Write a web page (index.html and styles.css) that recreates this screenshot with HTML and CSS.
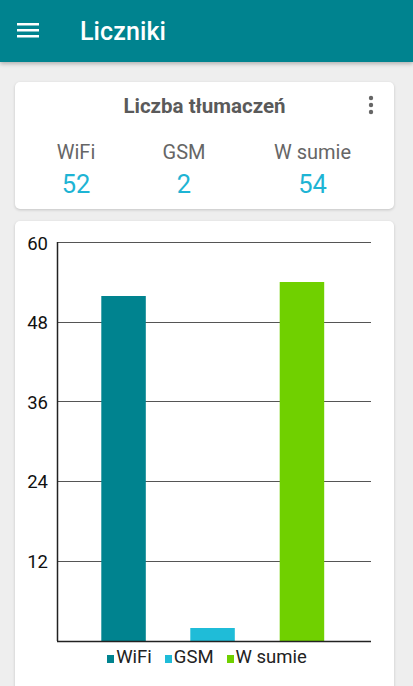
FILE: index.html
```html
<!DOCTYPE html>
<html lang="pl">
<head>
<meta charset="UTF-8">
<meta name="viewport" content="width=device-width, initial-scale=1.0">
<title>Liczniki</title>
<link rel="stylesheet" href="styles.css">
</head>
<body>
<header class="app-bar">
  <svg class="menu-icon" width="22" height="15" viewBox="0 0 22 15">
    <rect x="0" y="0" width="22" height="2.5" fill="#fff"/>
    <rect x="0" y="6" width="22" height="2.5" fill="#fff"/>
    <rect x="0" y="12" width="22" height="2.5" fill="#fff"/>
  </svg>
  <h1 class="app-title">Liczniki</h1>
</header>

<main class="content">
  <section class="card summary">
    <div class="summary-head">
      <span></span>
      <h2 class="summary-title">Liczba tłumaczeń</h2>
      <svg class="kebab" width="6" height="20" viewBox="0 0 6 20">
        <circle cx="3" cy="3" r="2.2" fill="#666"/>
        <circle cx="3" cy="10" r="2.2" fill="#666"/>
        <circle cx="3" cy="17" r="2.2" fill="#666"/>
      </svg>
    </div>
    <div class="stats">
      <div class="stat">
        <span class="stat-label">WiFi</span>
        <span class="stat-value">52</span>
      </div>
      <div class="stat">
        <span class="stat-label">GSM</span>
        <span class="stat-value">2</span>
      </div>
      <div class="stat">
        <span class="stat-label">W sumie</span>
        <span class="stat-value">54</span>
      </div>
    </div>
  </section>

  <section class="card chart-card">
    <svg class="chart" width="379" height="424" viewBox="0 0 379 424">
      <g class="grid">
        <line x1="42" y1="21.5" x2="356" y2="21.5"/>
        <line x1="42" y1="101.5" x2="356" y2="101.5"/>
        <line x1="42" y1="180.5" x2="356" y2="180.5"/>
        <line x1="42" y1="260.5" x2="356" y2="260.5"/>
        <line x1="42" y1="340.5" x2="356" y2="340.5"/>
      </g>
      <g class="labels">
        <text x="33" y="29">60</text>
        <text x="33" y="108">48</text>
        <text x="33" y="188">36</text>
        <text x="33" y="267">24</text>
        <text x="33" y="347">12</text>
      </g>
      <rect x="86.3" y="75" width="44.5" height="345" fill="#00838f"/>
      <rect x="175.3" y="407" width="44.5" height="13" fill="#1fbcd8"/>
      <rect x="264.7" y="61" width="44.5" height="359" fill="#70d000"/>
      <g class="axis">
        <line x1="42.5" y1="21" x2="42.5" y2="420"/>
        <line x1="42" y1="420.5" x2="356" y2="420.5"/>
      </g>
    </svg>
    <div class="legend">
      <span class="legend-item"><i class="swatch wifi"></i>WiFi</span>
      <span class="legend-item"><i class="swatch gsm"></i>GSM</span>
      <span class="legend-item"><i class="swatch total"></i>W sumie</span>
    </div>
  </section>
</main>
</body>
</html>
```

FILE: styles.css
```css
html, body {
  margin: 0;
  padding: 0;
}

body {
  font-family: Roboto, "Noto Sans", Arial, sans-serif;
  background-color: #eeeeee;
  height: 686px;
  overflow: hidden;
}

.app-bar {
  display: flex;
  align-items: center;
  height: 62px;
  padding-left: 17px;
  background-color: #00838f;
  box-shadow: 0 2px 4px rgba(0, 0, 0, 0.25);
  position: relative;
  z-index: 1;
}

.menu-icon {
  display: block;
  margin-top: -1px;
}

.app-title {
  margin: 0 0 0 41px;
  color: #fff;
  font-size: 25px;
  font-weight: 500;
  letter-spacing: 0.1px;
}

.content {
  padding: 20px 19px 0 15px;
  display: flex;
  flex-direction: column;
  gap: 12px;
}

.card {
  background-color: #fff;
  border-radius: 5px;
  box-shadow: 0 1px 3px rgba(0, 0, 0, 0.18);
}

.summary {
  height: 127px;
  box-sizing: border-box;
  padding-top: 11px;
}

.summary-head {
  display: grid;
  grid-template-columns: 1fr auto 1fr;
  align-items: center;
}

.summary-title {
  margin: 0;
  font-size: 20.5px;
  font-weight: 700;
  color: #5a5a5a;
  line-height: 26px;
}

.kebab {
  justify-self: end;
  margin-right: 20px;
  margin-top: -2px;
}

.stats {
  display: grid;
  grid-template-columns: 122px 94px 1fr;
  margin-top: 20px;
}

.stat {
  display: flex;
  flex-direction: column;
  align-items: center;
}

.stat-label {
  font-size: 20px;
  color: #666;
  line-height: 26px;
}

.stat-value {
  font-size: 25.5px;
  color: #1eb4d4;
  line-height: 30px;
  margin-top: 4px;
}

.chart-card {
  height: 480px;
}

.chart {
  display: block;
}

.grid line {
  stroke: #555;
  stroke-width: 1;
}

.axis line {
  stroke: #222;
  stroke-width: 1.5;
}

.labels text {
  font-family: Roboto, Arial, sans-serif;
  font-size: 18.5px;
  fill: #111;
  text-anchor: end;
}

.legend {
  display: flex;
  justify-content: center;
  gap: 13px;
  margin-top: 1px;
  padding-left: 5px;
  font-size: 18.5px;
  line-height: 22px;
  color: #222;
}

.legend-item {
  display: flex;
  align-items: center;
}

.swatch {
  display: inline-block;
  width: 7px;
  height: 8px;
  margin-right: 2px;
  margin-top: 3px;
}

.swatch.wifi {
  background-color: #00838f;
}

.swatch.gsm {
  background-color: #1fbcd8;
}

.swatch.total {
  background-color: #70d000;
}
```
